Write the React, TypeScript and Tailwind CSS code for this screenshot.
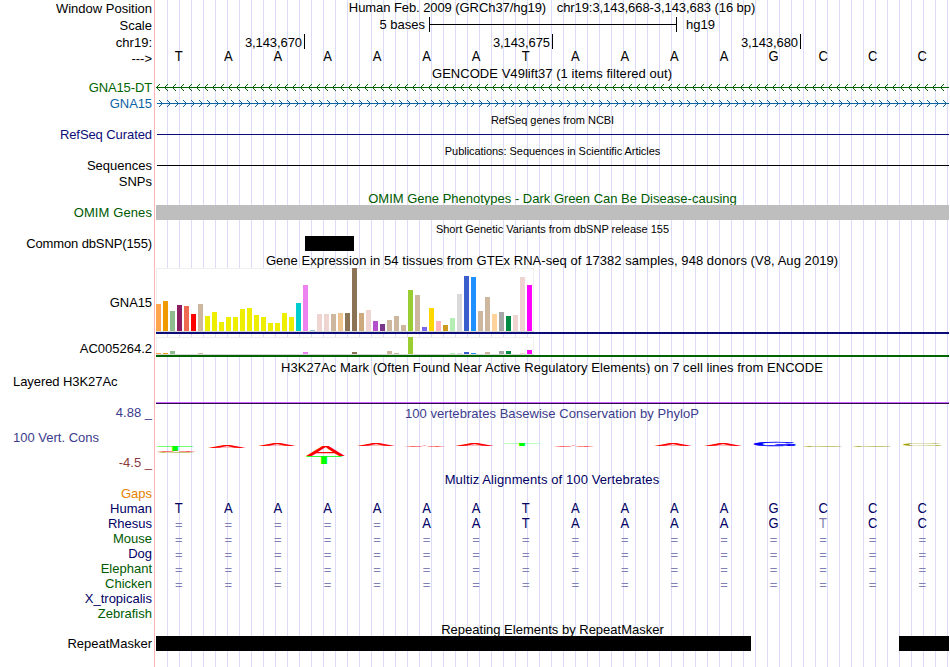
import React from "react";

const GRID =
  "bg-[repeating-linear-gradient(to_right,transparent_0,transparent_11px,#dcdcfa_11px,#dcdcfa_12px)]";

type RowProps = {
  h: string;
  label?: React.ReactNode;
  labelClass?: string;
  children?: React.ReactNode;
};

function Row({ h, label, labelClass = "", children }: RowProps) {
  return (
    <div className={`flex w-[949px] ${h}`}>
      <div className="w-[155px] shrink-0 border-r border-[#ffb4b4] pr-[2px] text-right">
        <div className={labelClass}>{label}</div>
      </div>
      <div className={`ml-px w-[793px] shrink-0 ${GRID}`}>{children}</div>
    </div>
  );
}

function Title({ children, className = "" }: { children: React.ReactNode; className?: string }) {
  return <div className={`text-center ${className}`}>{children}</div>;
}

function Bases({ seq, className = "" }: { seq: string; className?: string }) {
  return (
    <div className={`-ml-[2px] grid w-[793px] grid-cols-16 pt-px text-center leading-[13px] ${className}`}>
      {seq.split("").map((c, i) => (
        <span
          key={i}
          className={
            c === "="
              ? "pt-px text-[#8080b4]"
              : c === "t"
                ? "origin-[50%_11px] scale-y-[1.09] text-[#8080b4]"
                : "origin-[50%_11px] scale-y-[1.09]"
          }
        >
          {c.toUpperCase()}
        </span>
      ))}
    </div>
  );
}

function Strand({ color, dir }: { color: string; dir: "left" | "right" }) {
  let d = "";
  for (let i = 0; i < 100; i++) {
    const x = dir === "left" ? 0.5 + i * 8 : 6.5 + i * 8;
    const s = dir === "left" ? 3.5 : -3.5;
    d += `M${x} 7.5l${s} -3.5M${x} 7.5l${s} 3.5`;
  }
  return (
    <svg width="793" height="15" className="block" fill="none" stroke={color} shapeRendering="crispEdges">
      <path d={dir === "left" ? "M0 7.5H793" : "M1 7.5H793"} />
      <path d={d} />
    </svg>
  );
}

const TISSUES = [
  "#ffa54f", "#ee9a00", "#8fbc8f", "#8b1c62", "#ee6a50", "#ff0000", "#cdb79e",
  "#eeee00", "#eeee00", "#eeee00", "#eeee00", "#eeee00", "#eeee00", "#eeee00",
  "#eeee00", "#eeee00", "#eeee00", "#eeee00", "#eeee00", "#eeee00", "#00cdcd",
  "#ee82ee", "#9ac0cd", "#eed5d2", "#eed5d2", "#cdb79e", "#eec591", "#8b7355",
  "#8b7355", "#cdaa7d", "#eed5d2", "#b452cd", "#7a378b", "#cdb79e", "#cdb79e",
  "#cdb79e", "#9acd32", "#cdb79e", "#7a67ee", "#ffd700", "#ffb6c1", "#cd9b1d",
  "#b4eeb4", "#d9d9d9", "#3a5fcd", "#1e90ff", "#cdb79e", "#cdb79e", "#ffd39b",
  "#a6a6a6", "#008b45", "#eed5d2", "#eed5d2", "#ff00ff",
];
const GNA15 = [
  27, 30, 20, 26, 25, 17, 27, 15, 19, 9, 14, 14, 22, 23, 16, 14, 8, 8, 18, 14, 28, 46, 1, 17, 17,
  17, 18, 18, 63, 18, 21, 10, 7, 11, 15, 6, 41, 36, 4, 23, 10, 6, 13, 37, 55, 54, 20, 34, 17, 19,
  15, 16, 54, 46,
];
const AC005264 = [
  1, 1, 3, 0, 0, 0, 1, 0, 0, 0, 0, 0, 0, 0, 0, 0, 0, 0, 0, 0, 0, 2, 0, 0, 0, 0, 0, 0, 2, 0, 0, 0,
  0, 3, 1, 0, 17, 0, 0, 0, 0, 0, 1, 1, 2, 1, 0, 2, 0, 3, 3, 0, 1, 4,
];

function Expression({ values, className }: { values: number[]; className: string }) {
  return (
    <div
      className={`flex w-[378px] items-end gap-[2px] border-b border-[#d8d8d8] bg-white shadow-[inset_0_1px_#f0f0f0,inset_1px_0_#f0f0f0,inset_-1px_0_#f0f0f0] ${className}`}
    >
      {values.map((v, i) => (
        <div key={i} className="w-[5px]" style={{ height: v, backgroundColor: TISSUES[i] }} />
      ))}
    </div>
  );
}

// Left bearing and ink width of each letter at a 10px size.
const INK: Record<string, [number, number]> = {
  A: [0, 6.67],
  T: [0.2, 5.7],
  C: [0.5, 6.3],
  G: [0.5, 6.7],
};
const RED = "#ff0000";
const GREEN = "#00ff00";
const OLIVE = "#a0a000";
const LOGO: [string, number, number, number, number, string][] = [
  ["T", 1, 46, 36, 5, GREEN],
  ["A", 2, 51, 37, 1, RED],
  ["C", 2, 51.4, 37, 1.2, OLIVE],
  ["A", 52, 46, 38, 2, RED],
  ["A", 102, 43, 38, 3, RED],
  ["A", 150, 46, 39, 10, RED],
  ["T", 150, 56, 36, 8, GREEN],
  ["A", 201, 43, 38, 3, RED],
  ["A", 250, 46, 38, 1, RED],
  ["A", 299, 43, 39, 3, RED],
  ["T", 348, 43, 36, 3, GREEN],
  ["A", 399, 46, 38, 1, RED],
  ["A", 498, 43, 38, 3, RED],
  ["A", 548, 43, 38, 3, RED],
  ["G", 599, 42, 40, 4, "#0000ff"],
  ["C", 648, 46, 38, 1, OLIVE],
  ["C", 697, 46, 38, 1, OLIVE],
  ["C", 747, 43, 39, 3, OLIVE],
];

function Conservation() {
  return (
    <svg width="793" height="51" viewBox="0 20 793 51" className="block">
      {LOGO.map(([ch, x, y, w, h, fill], i) => (
        <text
          key={i}
          fontSize="10"
          fill={fill}
          stroke={ch === "G" || h === 1 ? fill : "none"}
          strokeWidth={ch === "C" ? "0.2" : "0.5"}
          transform={`translate(${x} ${y + h}) scale(${w / INK[ch][1]} ${h / 6.88}) translate(${-INK[ch][0]} 0)`}
        >
          {ch}
        </text>
      ))}
    </svg>
  );
}

const NAVY = "text-[#000064]";
const DKGREEN = "text-[#005a00]";
const EQ = "================";
const SPECIES: [string, string, string][] = [
  ["Gaps", "text-[#e68200]", ""],
  ["Human", NAVY, "TAAAAAATAAAAGCCC"],
  ["Rhesus", NAVY, "=====AATAAAAGtCC"],
  ["Mouse", DKGREEN, EQ],
  ["Dog", NAVY, EQ],
  ["Elephant", DKGREEN, EQ],
  ["Chicken", DKGREEN, EQ],
  ["X_tropicalis", NAVY, ""],
  ["Zebrafish", DKGREEN, ""],
];

const TICK =
  "h-[15px] border-r border-black pt-[2px] pr-[2px] leading-[13px] tracking-[-0.08px]";

export default function App() {
  return (
    <div className="h-[667px] w-[950px] overflow-hidden bg-white font-['Liberation_Sans',Arial,sans-serif] text-[13px] leading-[15px] text-black">
      <Row h="h-[17px]" label="Window Position" labelClass="pt-px">
        <Title className="mr-px whitespace-pre tracking-[-0.075px]">
          {"Human Feb. 2009 (GRCh37/hg19)   chr19:3,143,668-3,143,683 (16 bp)"}
        </Title>
      </Row>
      <Row h="h-[17px]" label="Scale" labelClass="pt-px">
        <div className="flex">
          <span className="w-[273px] pr-[4px] text-right">5 bases</span>
          <div className="flex h-[15px] w-[248px] items-center border-x border-black">
            <div className="h-px w-full bg-black" />
          </div>
          <span className="pl-[9px]">hg19</span>
        </div>
      </Row>
      <Row h="h-[15px]" label="chr19:" labelClass="pt-px">
        <div className="flex text-right">
          <span className={`w-[149px] ${TICK}`}>3,143,670</span>
          <span className={`w-[248px] ${TICK}`}>3,143,675</span>
          <span className={`w-[248px] ${TICK}`}>3,143,680</span>
        </div>
      </Row>
      <Row h="h-[17px]" label="--->" labelClass="pt-[2px]">
        <Bases seq="TAAAAAATAAAAGCCC" />
      </Row>
      <Row h="h-[14px]">
        <Title className="mr-px tracking-[0.04px]">GENCODE V49lift37 (1 items filtered out)</Title>
      </Row>
      <Row h="h-[16px]" label="GNA15-DT" labelClass="text-[#006400] tracking-[-0.12px]">
        <Strand color="#006400" dir="left" />
      </Row>
      <Row h="h-[16px]" label="GNA15" labelClass="text-[#0c64a4] tracking-[-0.1px]">
        <Strand color="#0c64a4" dir="right" />
      </Row>
      <Row h="h-[15px]">
        <Title className="pt-[1px] text-[11px] tracking-[-0.04px]">RefSeq genes from NCBI</Title>
      </Row>
      <Row h="h-[16px]" label="RefSeq Curated" labelClass="text-[#0c0c78] tracking-[-0.08px]">
        <div className="pt-[7px] pl-px">
          <div className="h-px bg-[#0c0c78]" />
        </div>
      </Row>
      <Row h="h-[15px]">
        <Title className="pt-[1px] text-[11px] tracking-[-0.05px]">
          Publications: Sequences in Scientific Articles
        </Title>
      </Row>
      <Row h="h-[16px]" label="Sequences">
        <div className="pt-[7px] pl-px">
          <div className="h-px bg-black" />
        </div>
      </Row>
      <Row h="h-[15px]" label="SNPs" />
      <Row h="h-[16px]">
        <Title className="h-[16px] overflow-hidden pt-[2px] text-[#005a00]">
          OMIM Gene Phenotypes - Dark Green Can Be Disease-causing
        </Title>
      </Row>
      <Row h="h-[15px]" label="OMIM Genes" labelClass="text-[#005a00] tracking-[0.1px]">
        <div className="h-[15px] bg-[#bebebe]" />
      </Row>
      <Row h="h-[16px]">
        <Title className="pt-[2px] text-[11px]">Short Genetic Variants from dbSNP release 155</Title>
      </Row>
      <Row h="h-[15px]" label="Common dbSNP(155)" labelClass="tracking-[-0.12px]">
        <div className="ml-[149px] h-[15px] w-[49px] bg-black" />
      </Row>
      <Row h="h-[17px]">
        <Title className="mr-px pt-[2px] tracking-[0.055px]">
          Gene Expression in 54 tissues from GTEx RNA-seq of 17382 samples, 948 donors (V8, Aug 2019)
        </Title>
      </Row>
      <Row h="h-[66px]" label="GNA15" labelClass="pt-[27px] tracking-[-0.1px]">
        <Expression values={GNA15} className="h-[64px]" />
        <div className="h-[2px] bg-[#0c0c78]" />
      </Row>
      <Row h="h-[23px]" label="AC005264.2" labelClass="pt-[7px]">
        <div className="pt-[3px]">
          <Expression values={AC005264} className="h-[18px]" />
        </div>
        <div className="h-[2px] bg-[#006400]" />
      </Row>
      <Row h="h-[16px]">
        <Title className="mr-px pt-[3px] tracking-[0.05px]">
          H3K27Ac Mark (Often Found Near Active Regulatory Elements) on 7 cell lines from ENCODE
        </Title>
      </Row>
      <Row h="h-[32px]" label="Layered H3K27Ac" labelClass="pt-px pl-[13px] text-left tracking-[-0.07px]">
        <div className="pt-[29px]">
          <div className="h-px bg-[#c864ff]" />
          <div className="h-px bg-[#30084c]" />
        </div>
      </Row>
      <Row
        h="h-[66px]"
        label={
          <>
            <div>4.88 _</div>
            <div className="mt-[10px] pl-[13px] text-left">100 Vert. Cons</div>
            <div className="mt-[10px] text-[#8c3c3c]">-4.5 _</div>
          </>
        }
        labelClass="text-[#3c3c8c]"
      >
        <Title className="mr-px h-[15px] pt-px tracking-[0.04px] text-[#3c3c8c]">
          100 vertebrates Basewise Conservation by PhyloP
        </Title>
        <Conservation />
      </Row>
      <Row h="h-[15px]">
        <Title className="mr-px pt-px tracking-[0.1px] text-[#000064]">Multiz Alignments of 100 Vertebrates</Title>
      </Row>
      {SPECIES.map(([name, color, seq]) => (
        <Row key={name} h="h-[15px]" label={name} labelClass={color}>
          <Bases seq={seq} className="text-[#000064]" />
        </Row>
      ))}
      <Row h="h-[15px]">
        <Title className="h-[15px] overflow-hidden pt-px">Repeating Elements by RepeatMasker</Title>
      </Row>
      <Row h="h-[15px]" label="RepeatMasker">
        <div className="flex h-[15px] justify-between">
          <div className="w-[595px] bg-black" />
          <div className="w-[50px] bg-black" />
        </div>
      </Row>
      <Row h="h-[16px]" />
    </div>
  );
}
